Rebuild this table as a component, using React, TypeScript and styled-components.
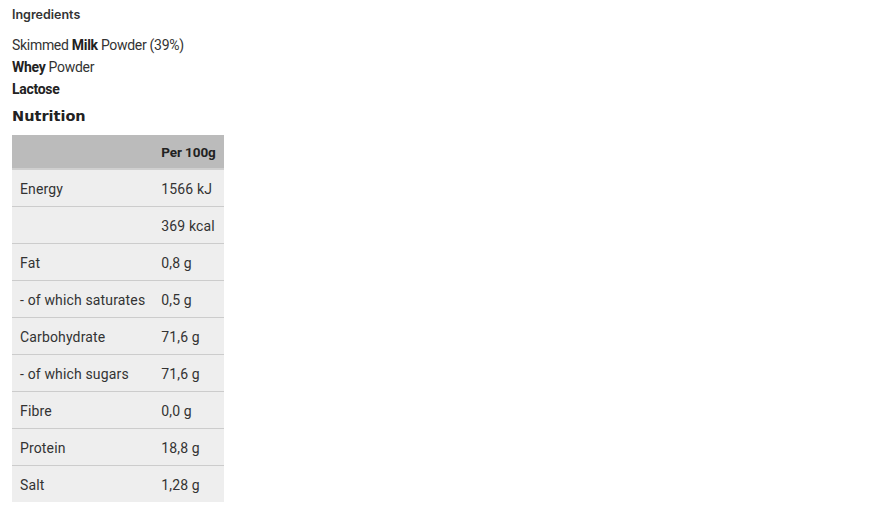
import React from "react";
import styled, { createGlobalStyle } from "styled-components";

const Global = createGlobalStyle`
  html, body { margin: 0; padding: 0; background: #ffffff; }
  body { font-family: Roboto, "Open Sans", sans-serif; color: #333333; }
`;

const Page = styled.div`
  padding: 5px 12px 10px 12px;
`;

const Title = styled.div`
  font-family: Inter, Roboto, sans-serif;
  font-size: 12.5px;
  line-height: 20px;
  font-weight: 600;
  color: #333333;
`;

const IngredientList = styled.div`
  margin-top: 9px;
  display: flex;
  flex-direction: column;
`;

const Ingredient = styled.div`
  font-size: 14px;
  line-height: 22px;
  letter-spacing: -0.3px;
  color: #333333;
  b { font-weight: 700; color: #222222; }
`;

const Heading = styled.h2`
  margin: 6px 0 9px 0;
  font-family: "DejaVu Sans", Verdana, sans-serif;
  font-size: 14.5px;
  line-height: 20px;
  font-weight: 700;
  color: #222222;
`;

const Table = styled.table`
  border-collapse: collapse;
  font-size: 14px;
  letter-spacing: 0.15px;
  color: #333333;
`;

const HeadCell = styled.th`
  background: #bbbbbb;
  height: 34px;
  padding: 0 8px;
  text-align: left;
  font-weight: 700;
  font-size: 13.5px;
  letter-spacing: -0.1px;
  color: #222222;
  border-bottom: 2px solid #cfcfcf;
  box-sizing: border-box;
`;

const Row = styled.tr`
  background: #eeeeee;
  border-bottom: 1px solid #cccccc;
  &:last-child { border-bottom: none; }
`;

const Cell = styled.td`
  height: 35px;
  padding: 1px 8px 0 8px;
  white-space: nowrap;
`;

const rows: [string, string][] = [
  ["Energy", "1566 kJ"],
  ["", "369 kcal"],
  ["Fat", "0,8 g"],
  ["- of which saturates", "0,5 g"],
  ["Carbohydrate", "71,6 g"],
  ["- of which sugars", "71,6 g"],
  ["Fibre", "0,0 g"],
  ["Protein", "18,8 g"],
  ["Salt", "1,28 g"],
];

export default function App() {
  return (
    <>
      <Global />
      <Page>
        <Title>Ingredients</Title>
        <IngredientList>
          <Ingredient>
            Skimmed <b>Milk</b> Powder (39%)
          </Ingredient>
          <Ingredient>
            <b>Whey</b> Powder
          </Ingredient>
          <Ingredient>
            <b>Lactose</b>
          </Ingredient>
        </IngredientList>
        <Heading>Nutrition</Heading>
        <Table>
          <thead>
            <tr>
              <HeadCell></HeadCell>
              <HeadCell>Per 100g</HeadCell>
            </tr>
          </thead>
          <tbody>
            {rows.map(([label, value], i) => (
              <Row key={i}>
                <Cell>{label}</Cell>
                <Cell>{value}</Cell>
              </Row>
            ))}
          </tbody>
        </Table>
      </Page>
    </>
  );
}
